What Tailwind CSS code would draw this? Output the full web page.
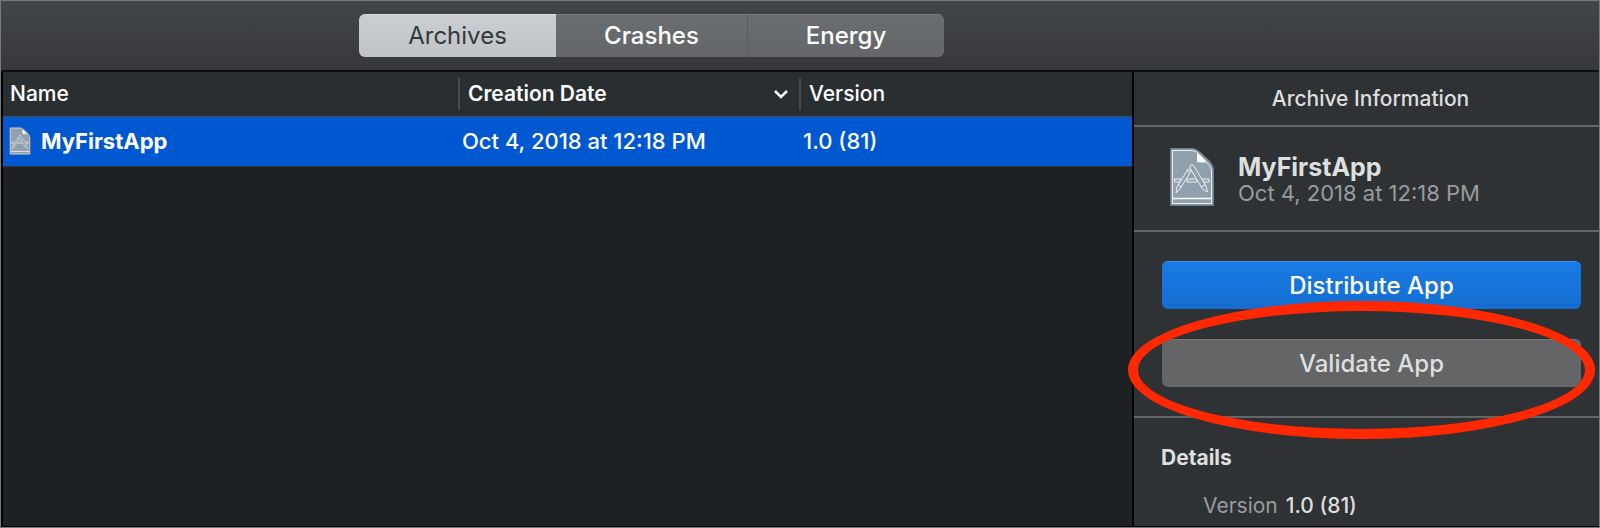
<!DOCTYPE html>
<html lang="en">
<head>
  <meta charset="UTF-8" />
  <meta name="viewport" content="width=device-width, initial-scale=1.0" />
  <title>Archives</title>
  <script src="https://cdn.jsdelivr.net/npm/@tailwindcss/browser@4"></script>
</head>
<body class="min-h-screen flex flex-col border border-[#777a7a] bg-[#1d2123] font-['Inter',sans-serif] text-white">

  <!-- Archive document icon, shared by the list and the sidebar -->
  <svg class="hidden">
    <symbol id="archiveIcon" viewBox="0 0 44 58">
      <path d="M.5.5H22C27 1 30 4 34 8C39 12 43 16 43.500 22V57.500H.5Z" fill="#8997a5" stroke="#6f7c88" />
      <path d="M2.500 2.500H22C26 3 28 5 29 7V14H36C39 16 41 19 41.500 23V55.500H2.500Z" fill="#91a0ad" stroke="#e9edf0" />
      <path d="M27 4.500V14H36.500C34 10 30 7 27 4.500Z" fill="#fff" />
      <path d="M3 50.500H41" stroke="#fff" stroke-width="1.500" />
      <g fill="#91a0ad" stroke="#eef1f3" stroke-width="1">
        <path d="M4.500 31h6v3h-6zM17 31h10v3H17zM33 31h6v3h-6z" />
        <path d="M18 21l3 2L10 41l-4 4 1-6z" />
        <path d="M20 18q2-3 4 0l12 20 1.500 6-5-3-12.500-21z" />
        <path d="M8 37l3 2M31 39l4-2M17 23l3 2" fill="none" />
      </g>
    </symbol>
  </svg>

  <!-- Toolbar -->
  <header class="h-[71px] shrink-0 border-b-2 border-[#0c0e0f] bg-linear-to-b from-[#424648] to-[#37383b] pt-[13px] pl-[358px]">
    <div class="inline-flex h-[43px] overflow-hidden rounded-md text-2xl">
      <button class="w-[197px] border-t border-[#d5d8da] bg-linear-to-b from-[#caced1] to-[#c1c4c7] text-[#35383b]">Archives</button>
      <button class="w-48 border-t border-r border-t-[#797d7f] border-r-[#595c5f] bg-linear-to-b from-[#6a6e70] to-[#646669] font-medium">Crashes</button>
      <button class="w-[196px] border-t border-[#797d7f] bg-linear-to-b from-[#6a6e70] to-[#646669] font-medium">Energy</button>
    </div>
  </header>

  <div class="flex flex-1 border-b border-black">
    <!-- Archive list -->
    <main class="flex-1 border-x-2 border-black">
      <table class="w-full table-fixed border-collapse text-left text-[21px] leading-6">
        <thead class="bg-[#292e30]">
          <tr class="h-11 border-b border-[#454a4c]">
            <th class="w-[455px] pl-[7px] font-medium">Name</th>
            <th class="w-[341px]">
              <div class="flex h-8 items-center justify-between border-l-2 border-[#464b4d] pr-2.5 pl-2 font-semibold">
                Creation Date
                <svg class="h-2.5 w-4" viewBox="0 0 16 10" fill="none" stroke="#fff" stroke-width="2.500"><path d="M2 2l6 6 6-6" /></svg>
              </div>
            </th>
            <th>
              <div class="flex h-8 items-center border-l-2 border-[#464b4d] pl-2 font-medium">Version</div>
            </th>
          </tr>
        </thead>
        <tbody>
          <tr class="h-[50px] border-b border-[#323638] bg-[#0058d1] text-[22px] font-medium">
            <td class="pl-1.5">
              <div class="flex items-center gap-2.5 font-bold">
                <svg class="h-7 w-[22px]"><use href="#archiveIcon" /></svg>
                MyFirstApp
              </div>
            </td>
            <td class="pl-1">Oct 4, 2018 at 12:18 PM</td>
            <td class="pl-1">1.0 (81)</td>
          </tr>
        </tbody>
      </table>
    </main>

    <!-- Sidebar -->
    <aside class="w-[465px] shrink-0 bg-[#2e3234] text-[21px] leading-6 text-[#dedfdf]">
      <h2 class="flex h-[55px] items-center justify-center border-b-2 border-[#626666] pl-2 font-medium">Archive Information</h2>

      <div class="flex h-[105px] items-center gap-6 border-b-2 border-[#626666] pb-1 pl-9">
        <svg class="h-[58px] w-11"><use href="#archiveIcon" /></svg>
        <div class="pt-1">
          <div class="text-[25px] leading-7 font-bold">MyFirstApp</div>
          <div class="text-[22px] text-[#9a9c9d]">Oct 4, 2018 at 12:18 PM</div>
        </div>
      </div>

      <div class="border-b-2 border-[#626666] py-[29px] pr-[18px] pl-7">
        <button class="block h-12 w-full rounded-md border-t border-[#3c8ded] bg-linear-to-b from-[#187be6] to-[#146dcf] text-2xl font-medium text-white">Distribute App</button>
        <div class="relative mt-[30px]">
          <button class="block h-12 w-full rounded-md border-t border-[#757678] bg-[#646567] text-2xl font-medium">Validate App</button>
          <!-- Red highlight ring -->
          <div class="pointer-events-none absolute -top-[38px] -right-3.5 -bottom-[52px] -left-[34px] rounded-[50%] border-10 border-[#ff2800]"></div>
        </div>
      </div>

      <section class="pt-7 pb-2 pl-[27px]">
        <h3 class="font-bold">Details</h3>
        <dl class="mt-6 flex gap-2 pl-[42px]">
          <dt class="text-[#9a9c9d]">Version</dt>
          <dd class="font-medium">1.0 (81)</dd>
        </dl>
      </section>
    </aside>
  </div>
</body>
</html>
